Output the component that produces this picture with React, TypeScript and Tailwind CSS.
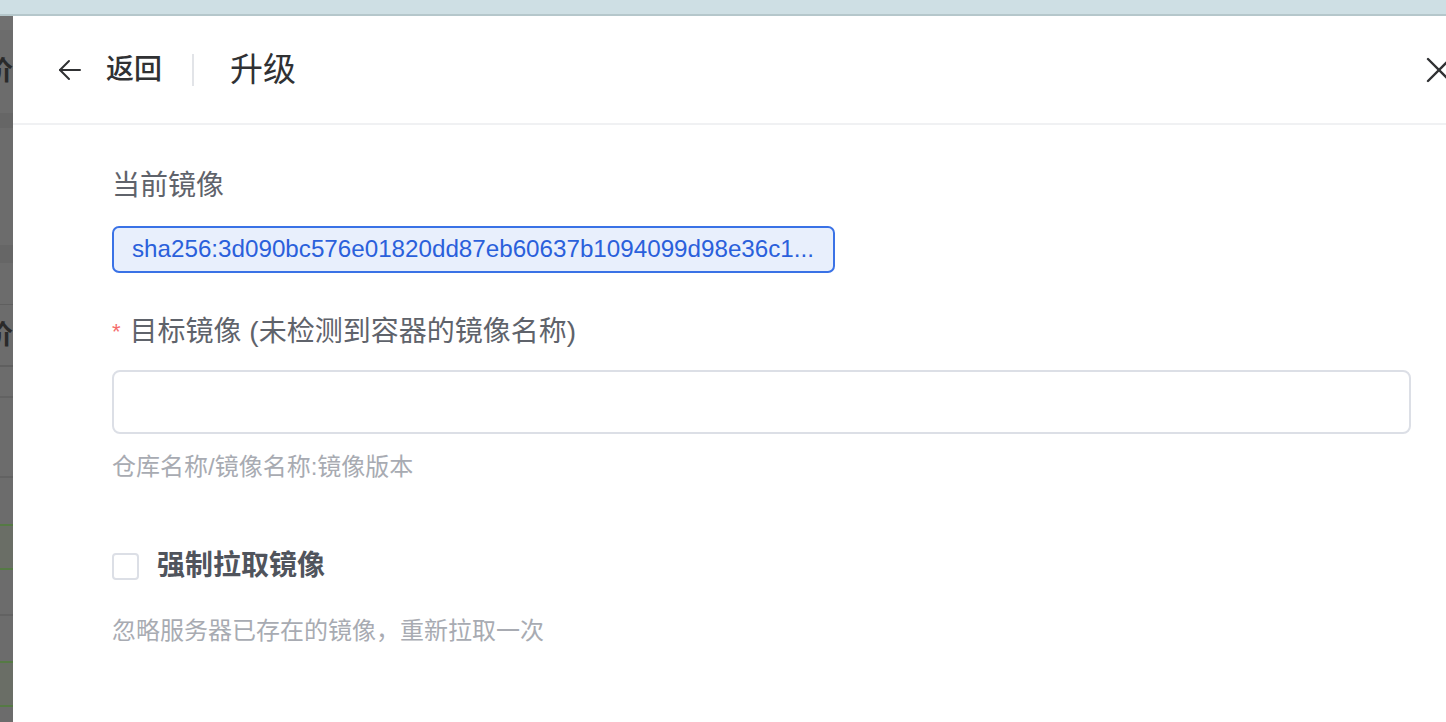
import React from "react";

const font = { fontFamily: '"Liberation Sans", "Noto Sans CJK SC", sans-serif' };

function BackArrow() {
  return (
    <svg width="24" height="22" viewBox="0 0 24 22" fill="none" stroke="#303133" strokeWidth="2" strokeLinecap="round" strokeLinejoin="round">
      <path d="M2 11h20" />
      <path d="M11 2L2 11l9 9" />
    </svg>
  );
}

function CloseIcon() {
  return (
    <svg width="26" height="26" viewBox="0 0 26 26" fill="none" stroke="#303133" strokeWidth="2.4" strokeLinecap="round">
      <path d="M2 2l22 22" />
      <path d="M24 2L2 24" />
    </svg>
  );
}

// dimmed list page peeking out behind the drawer
function BackdropStrip() {
  return (
    <div className="w-[13px] shrink-0 overflow-hidden bg-[#6c6c6c]">
      <div className="ml-[-22px] w-[35px]">
        <div className="h-[14px] bg-[#707070]" />
        <div className="flex h-[83px] items-center justify-end text-[27px] font-bold leading-none text-[#2a2a2a]">
          价
        </div>
        <div className="h-[15px] bg-[#666666]" />
        <div className="h-[117px]" />
        <div className="h-[18px] bg-[#666666]" />
        <div className="h-[42px] border-b border-[#5f5f5f]" />
        <div className="flex h-[62px] items-center justify-end border-b-2 border-[#5f5f5f] text-[27px] font-bold leading-none text-[#2a2a2a]">
          价
        </div>
        <div className="h-[31px] border-b-2 border-[#626262]" />
        <div className="h-[80px] border-b-2 border-[#626262]" />
        <div className="h-[46px]" />
        <div className="flex h-[46px] items-center justify-end border-y-2 border-[#557a44] bg-[#6a6e66] text-[22px] font-bold leading-none text-[#3f7027]">
          启动
        </div>
        <div className="h-[46px] border-b-2 border-[#626262]" />
        <div className="h-[45px]" />
        <div className="flex h-[46px] items-center justify-end border-y-2 border-[#557a44] bg-[#6a6e66] text-[22px] font-bold leading-none text-[#3f7027]">
          启动
        </div>
      </div>
    </div>
  );
}

export default function App() {
  return (
    <div className="flex h-[722px] w-[1446px] flex-col overflow-hidden bg-white" style={font}>
      <div className="h-[16px] shrink-0 border-b-2 border-[#b5c7cb] bg-[#cedfe4]" />

      <div className="flex min-h-0 flex-1">
        <BackdropStrip />

        <div className="flex min-w-0 flex-1 flex-col bg-white">
          <div className="flex h-[109px] shrink-0 items-center border-b-2 border-[#f0f1f3] pl-[45px]">
            <button type="button" className="flex items-center">
              <BackArrow />
              <span className="ml-[24px] text-[28px] font-medium leading-none text-[#303133]">返回</span>
            </button>
            <div className="ml-[30px] h-[32px] w-[2px] bg-[#e2e4e8]" />
            <h2 className="ml-[36px] text-[33px] font-normal leading-none text-[#303133]">升级</h2>
            <button type="button" className="ml-auto mr-[-6px] mt-[1px]">
              <CloseIcon />
            </button>
          </div>

          <div className="flex flex-col pl-[99px] pr-[35px] pt-[41px]">
            <p className="text-[28px] leading-[40px] text-[#5f636b]">当前镜像</p>
            <div className="mt-[20px] flex h-[47px] w-[723px] items-center overflow-hidden rounded-[7px] border-2 border-[#3a72e6] bg-[#e8effc] px-[18px]">
              <span className="whitespace-nowrap text-[24.2px] leading-none text-[#2a60db]">
                sha256:3d090bc576e01820dd87eb60637b1094099d98e36c1...
              </span>
            </div>

            <p className="mt-[39px] flex items-center text-[28px] leading-[40px] text-[#5f636b]">
              <span className="mr-[9px] text-[22px] text-[#f56c6c]">*</span>
              目标镜像 (未检测到容器的镜像名称)
            </p>
            <input
              type="text"
              className="mt-[18px] h-[64px] w-full rounded-[8px] border-2 border-[#dcdfe6] bg-white px-[16px] text-[24px] outline-none"
            />
            <p className="mt-[17px] text-[24px] leading-[32px] text-[#a8abb2]">仓库名称/镜像名称:镜像版本</p>

            <label className="mt-[63px] flex h-[40px] items-center">
              <span className="h-[27px] w-[27px] rounded-[4px] border-2 border-[#dcdfe6] bg-white" />
              <span className="ml-[18px] text-[28px] font-bold leading-none text-[#50545c]">强制拉取镜像</span>
            </label>
            <p className="mt-[29px] text-[24px] leading-[32px] text-[#a8abb2]">忽略服务器已存在的镜像，重新拉取一次</p>
          </div>
        </div>
      </div>
    </div>
  );
}
